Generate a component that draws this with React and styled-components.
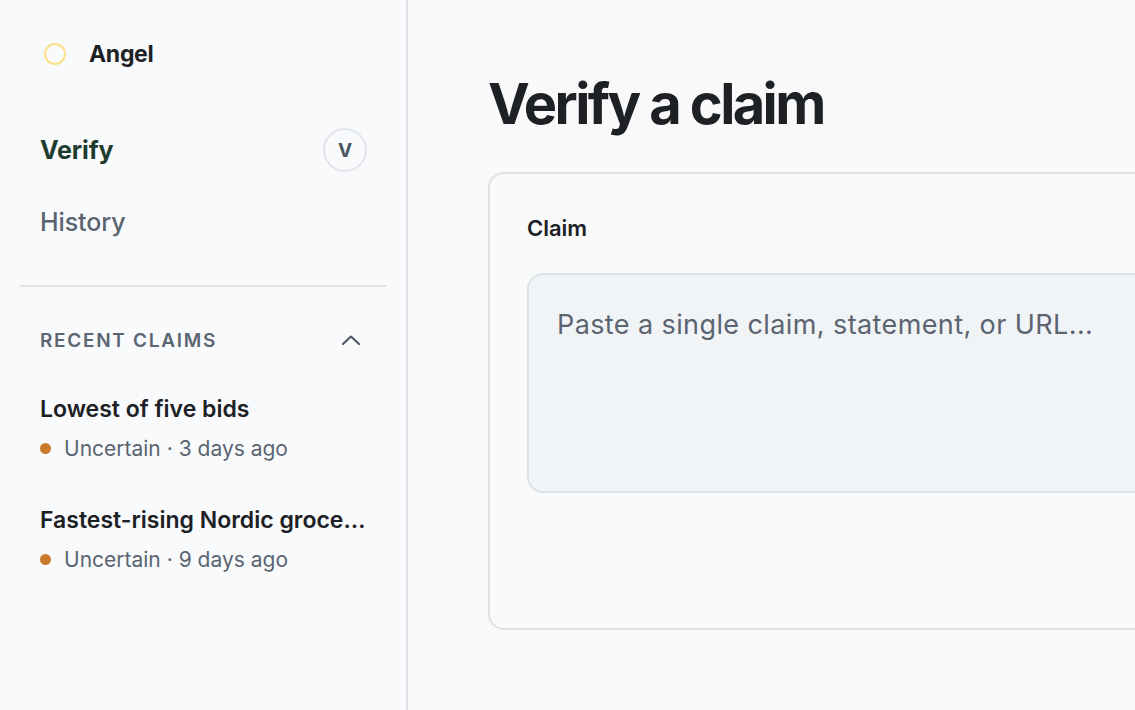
import React from 'react';
import styled, { createGlobalStyle } from 'styled-components';

const GlobalStyle = createGlobalStyle`
  html, body {
    margin: 0;
    padding: 0;
    height: 100%;
    overflow: hidden;
  }
  body {
    font-family: Inter, "Noto Sans", "Liberation Sans", sans-serif;
    background: #faf9f9;
    color: #1d2125;
  }
  #root {
    height: 100%;
  }
`;

const Layout = styled.div`
  display: flex;
  height: 710px;
  width: 1135px;
  overflow: hidden;
`;

const Sidebar = styled.aside`
  width: 408px;
  flex-shrink: 0;
  box-sizing: border-box;
  background: #f8fafb;
  border-right: 2px solid #dfe3e7;
  display: flex;
  flex-direction: column;
`;

const Brand = styled.div`
  display: flex;
  align-items: center;
  gap: 23px;
  padding: 41px 0 0 44px;
  height: 26px;
`;

const BrandMark = styled.span`
  width: 18px;
  height: 18px;
  border-radius: 50%;
  border: 2px solid #fde18c;
`;

const BrandName = styled.span`
  font-size: 23px;
  font-weight: 700;
  letter-spacing: -0.3px;
  color: #1d2125;
`;

const Nav = styled.nav`
  display: flex;
  flex-direction: column;
  padding: 47px 40px 0 40px;
`;

const NavItem = styled.div`
  display: flex;
  align-items: center;
  justify-content: space-between;
  height: 72px;
  font-size: 25px;
  font-weight: ${p => (p.$active ? 700 : 500)};
  color: ${p => (p.$active ? '#1e3b2e' : '#5b6571')};
  letter-spacing: -0.1px;
`;

const KeyBadge = styled.span`
  width: 40px;
  height: 40px;
  margin-right: -1px;
  border-radius: 50%;
  border: 2px solid #e1e4e8;
  display: flex;
  align-items: center;
  justify-content: center;
  font-size: 19px;
  font-weight: 700;
  color: #4a5461;
`;

const Divider = styled.hr`
  margin: 27px 20px 0 20px;
  border: none;
  border-top: 2px solid #dfe3e6;
`;

const SectionHead = styled.div`
  display: flex;
  align-items: center;
  justify-content: space-between;
  padding: 30px 46px 0 40px;
  height: 46px;
`;

const SectionTitle = styled.span`
  font-size: 19px;
  font-weight: 600;
  letter-spacing: 1.7px;
  color: #5b6573;
`;

const ClaimList = styled.div`
  display: flex;
  flex-direction: column;
  gap: 43px;
  padding: 32px 40px 0 40px;
`;

const ClaimItem = styled.div`
  display: flex;
  flex-direction: column;
  gap: 10px;
`;

const ClaimTitle = styled.div`
  font-size: 23px;
  font-weight: 600;
  color: #1d2125;
  white-space: nowrap;
  overflow: hidden;
  text-overflow: ellipsis;
  max-width: 326px;
  line-height: 29px;
`;

const ClaimMeta = styled.div`
  display: flex;
  align-items: center;
  gap: 13px;
  font-size: 21px;
  color: #5b6572;
  line-height: 29px;
`;

const StatusDot = styled.span`
  width: 11px;
  height: 11px;
  border-radius: 50%;
  background: ${p => p.$color};
`;

const Main = styled.main`
  flex: 1;
  padding: 68px 0 0 80px;
  min-width: 0;
`;

const Title = styled.h1`
  margin: 0;
  font-size: 56px;
  font-weight: 700;
  letter-spacing: -2.6px;
  line-height: 72px;
  color: #1d2125;
`;

const Card = styled.section`
  margin-top: 32px;
  width: 760px;
  height: 458px;
  box-sizing: border-box;
  border: 2px solid #dee2e5;
  border-radius: 16px;
  background: #f9fbfb;
  padding: 38px 37px;
`;

const Label = styled.div`
  font-size: 22px;
  font-weight: 600;
  color: #1d2125;
  line-height: 32px;
`;

const ClaimInput = styled.textarea`
  display: block;
  margin-top: 29px;
  width: 100%;
  height: 220px;
  box-sizing: border-box;
  resize: none;
  border: 2px solid #dde2e6;
  border-radius: 16px;
  background: #f1f4f6;
  padding: 33px 28px;
  font-family: inherit;
  font-size: 27px;
  letter-spacing: 0.4px;
  line-height: 34px;
  color: #1d2125;
  outline: none;

  &::placeholder {
    color: #5b6470;
  }
`;

const recent = [
  { title: 'Lowest of five bids', status: 'Uncertain', age: '3 days ago' },
  { title: 'Fastest-rising Nordic grocery chain', status: 'Uncertain', age: '9 days ago' },
];

function ChevronUp() {
  return (
    <svg width="18" height="10" viewBox="0 0 18 10" fill="none">
      <path d="M1 9L9 1.5L17 9" stroke="#4b5563" strokeWidth="2" strokeLinecap="round" strokeLinejoin="round" />
    </svg>
  );
}

export default function App() {
  return (
    <>
      <GlobalStyle />
      <Layout>
        <Sidebar>
          <Brand>
            <BrandMark />
            <BrandName>Angel</BrandName>
          </Brand>
          <Nav>
            <NavItem $active>
              Verify
              <KeyBadge>V</KeyBadge>
            </NavItem>
            <NavItem>History</NavItem>
          </Nav>
          <Divider />
          <SectionHead>
            <SectionTitle>RECENT CLAIMS</SectionTitle>
            <ChevronUp />
          </SectionHead>
          <ClaimList>
            {recent.map(c => (
              <ClaimItem key={c.title}>
                <ClaimTitle>{c.title}</ClaimTitle>
                <ClaimMeta>
                  <StatusDot $color="#c97a2b" />
                  {c.status} · {c.age}
                </ClaimMeta>
              </ClaimItem>
            ))}
          </ClaimList>
        </Sidebar>
        <Main>
          <Title>Verify a claim</Title>
          <Card>
            <Label>Claim</Label>
            <ClaimInput placeholder="Paste a single claim, statement, or URL..." />
          </Card>
        </Main>
      </Layout>
    </>
  );
}
